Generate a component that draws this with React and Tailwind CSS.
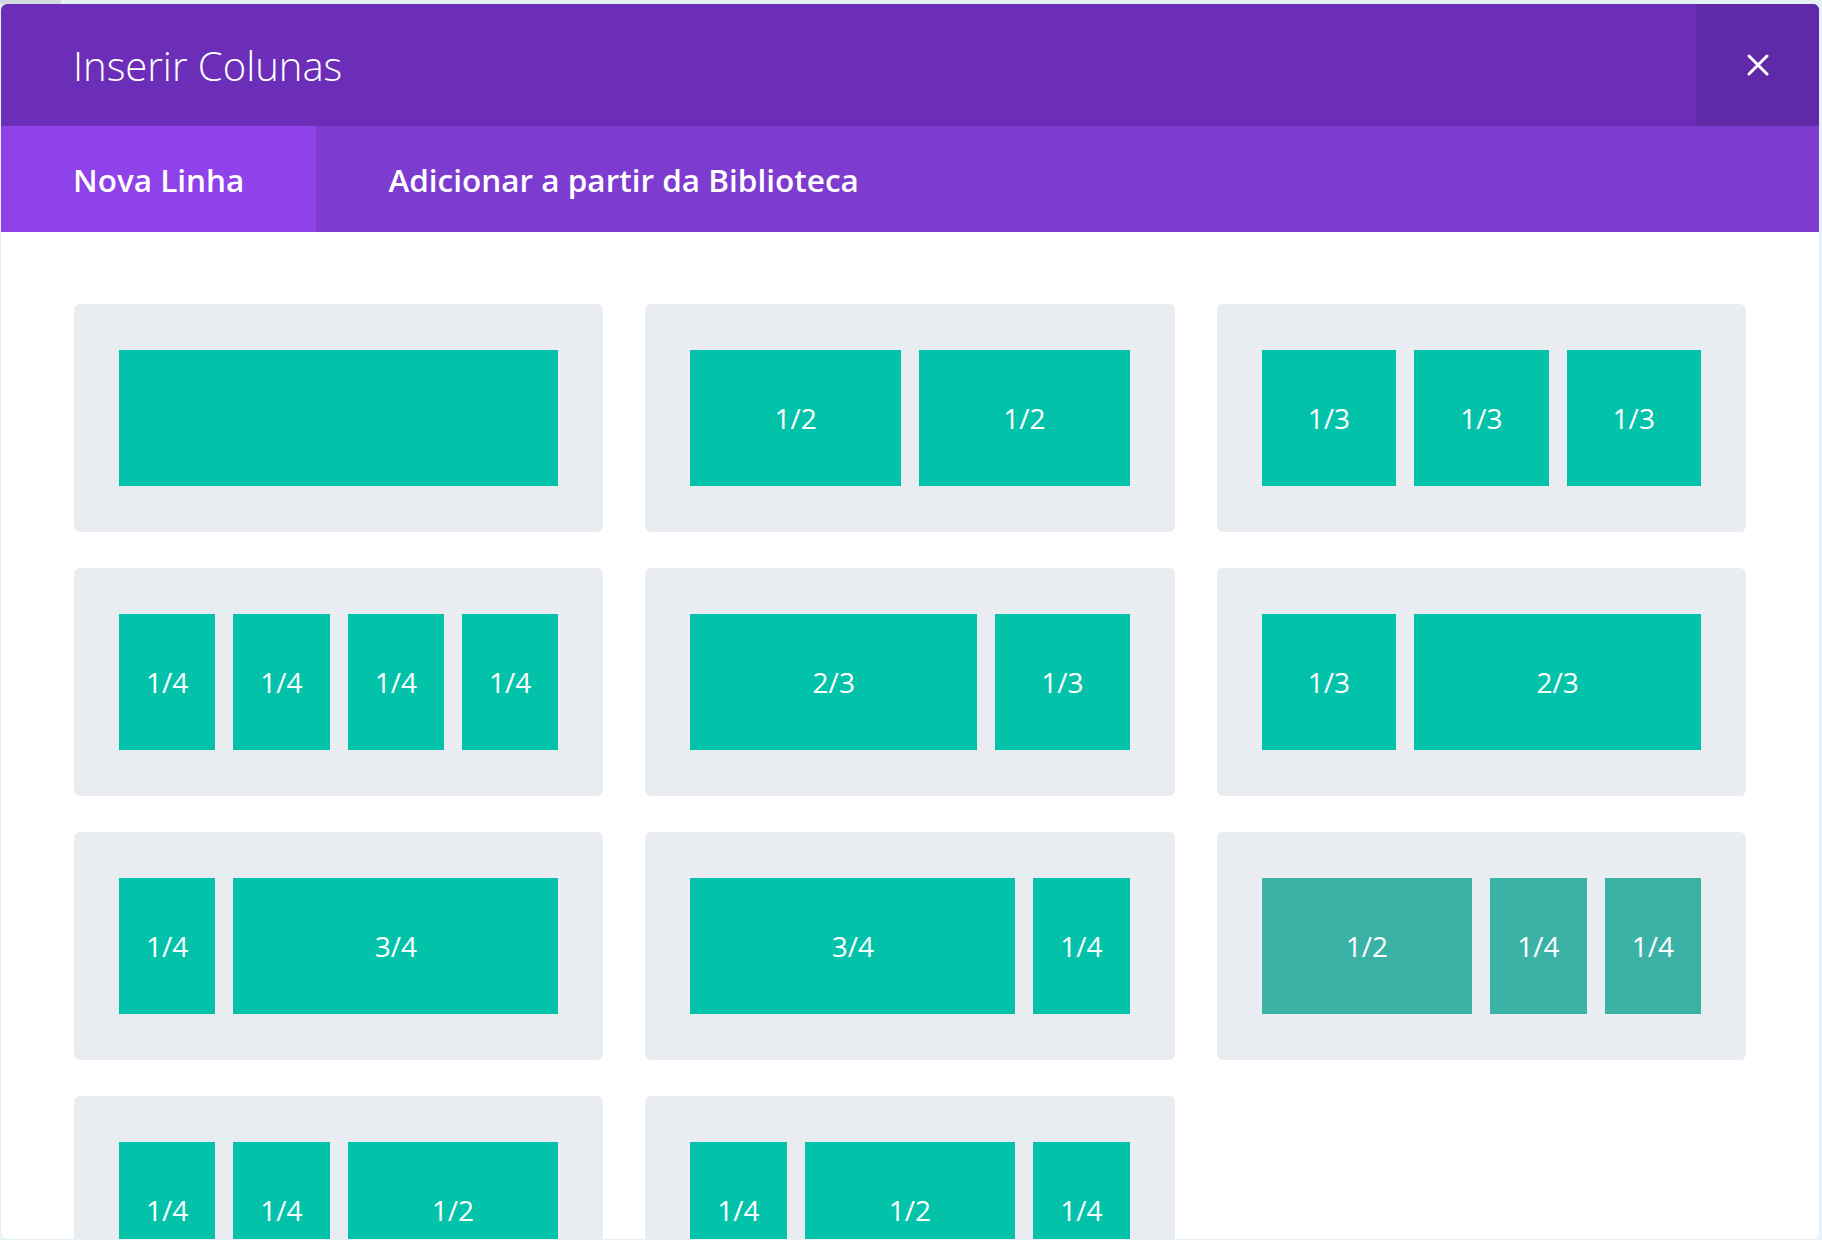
import { useState } from 'react';

const fractionLabel = {
  12: '',
  9: '3/4',
  8: '2/3',
  6: '1/2',
  4: '1/3',
  3: '1/4',
};

const spanClass = {
  12: 'col-span-12',
  9: 'col-span-9',
  8: 'col-span-8',
  6: 'col-span-6',
  4: 'col-span-4',
  3: 'col-span-3',
};

const layouts = [
  [12],
  [6, 6],
  [4, 4, 4],
  [3, 3, 3, 3],
  [8, 4],
  [4, 8],
  [3, 9],
  [9, 3],
  [6, 3, 3],
  [3, 3, 6],
  [3, 6, 3],
];

function LayoutCard({ cols, hovered }) {
  return (
    <button
      type="button"
      className="block w-full rounded-md bg-[#e9edf1] px-[45px] py-[46px] text-left"
    >
      <div className="grid grid-cols-12 gap-x-[18px]">
        {cols.map((span, i) => (
          <div
            key={i}
            className={`${spanClass[span]} flex h-[136px] items-center justify-center text-[28px] font-normal text-white ${
              hovered ? 'bg-[#3bb2a6]' : 'bg-[#02c3aa]'
            }`}
          >
            {fractionLabel[span]}
          </div>
        ))}
      </div>
    </button>
  );
}

export default function App() {
  const [tab, setTab] = useState('new');

  return (
    <div
      className="flex h-[1240px] flex-col overflow-hidden bg-[#e4f1f6]"
      style={{ fontFamily: '"Open Sans", "Noto Sans", sans-serif' }}
    >
      <div className="flex h-[4px] shrink-0">
        <div className="w-[61px] bg-[#d0dadf]" />
        <div className="flex-1" />
      </div>
      <div className="ml-[1px] flex h-[1235px] w-[1818px] flex-col overflow-hidden rounded-md bg-white">
        <header className="flex h-[122px] shrink-0 items-stretch bg-[#6c2eb9]">
          <h1 className="flex flex-1 items-center pl-[72px] pt-[2px] text-[40px] font-light text-white">
            Inserir Colunas
          </h1>
          <button
            type="button"
            className="flex w-[123px] items-center justify-center bg-[#5f29a7]"
            aria-label="Fechar"
          >
            <svg width="22" height="22" viewBox="0 0 22 22" fill="none">
              <path d="M2 2L20 20M20 2L2 20" stroke="white" strokeWidth="3" strokeLinecap="round" />
            </svg>
          </button>
        </header>

        <nav className="flex h-[106px] shrink-0 bg-[#7d3bcf]">
          <button
            type="button"
            onClick={() => setTab('new')}
            className={`px-[72px] pt-[2px] text-[31.5px] font-semibold text-white ${tab === 'new' ? 'bg-[#8f42ea]' : ''}`}
          >
            Nova Linha
          </button>
          <button
            type="button"
            onClick={() => setTab('library')}
            className={`px-[72px] pt-[2px] text-[31.5px] font-semibold text-white ${tab === 'library' ? 'bg-[#8f42ea]' : ''}`}
          >
            Adicionar a partir da Biblioteca
          </button>
        </nav>

        <div className="grid grid-cols-3 gap-x-[42px] gap-y-[36px] px-[73px] pt-[72px]">
          {layouts.map((cols, i) => (
            <LayoutCard key={i} cols={cols} hovered={i === 8} />
          ))}
        </div>
      </div>
    </div>
  );
}
